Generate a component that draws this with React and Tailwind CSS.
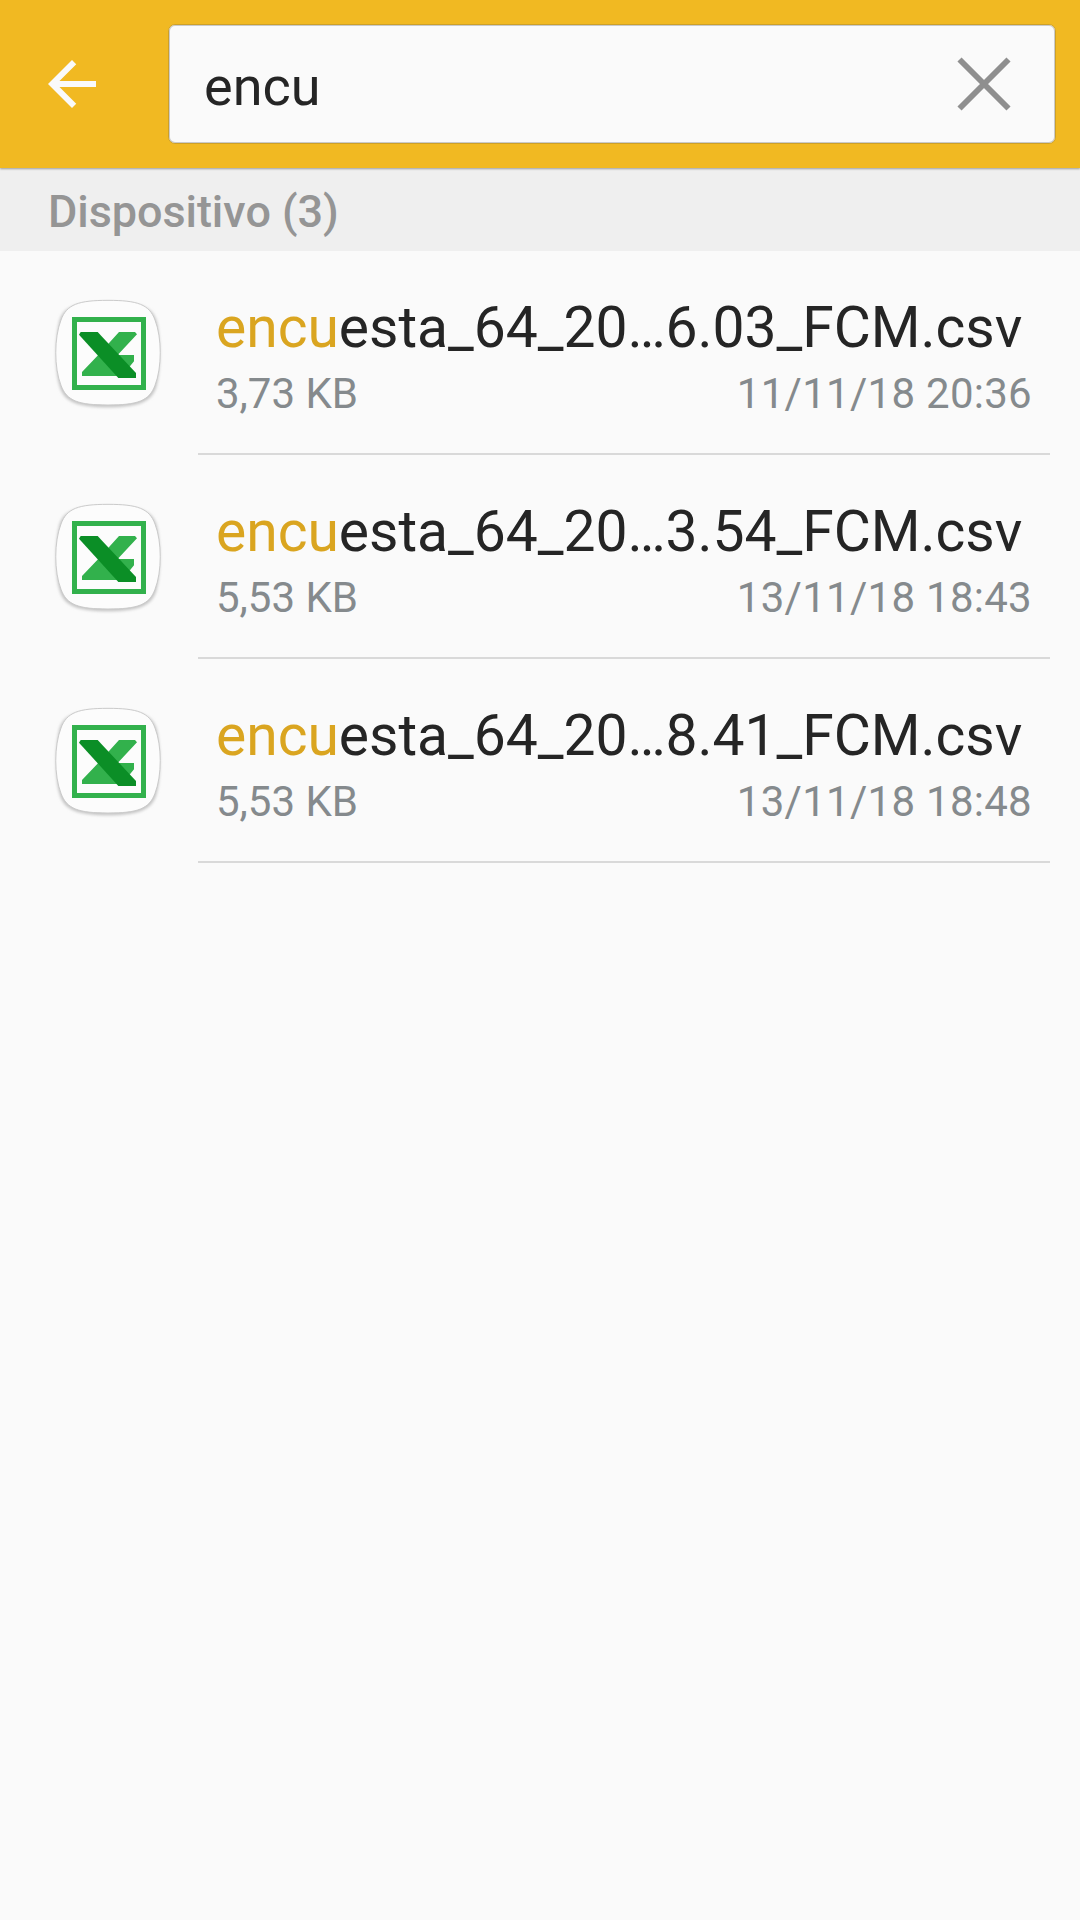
const files = [
  { tail: "esta_64_20…6.03_FCM.csv", size: "3,73 KB", date: "11/11/18 20:36" },
  { tail: "esta_64_20…3.54_FCM.csv", size: "5,53 KB", date: "13/11/18 18:43" },
  { tail: "esta_64_20…8.41_FCM.csv", size: "5,53 KB", date: "13/11/18 18:48" },
];

function SheetIcon() {
  return (
    <svg viewBox="0 0 420 390" className="mt-[39px] ml-10 h-[130px] w-[140px] shrink-0">
      <defs>
        <filter id="soft" x="-10%" y="-10%" width="120%" height="125%">
          <feGaussianBlur stdDeviation="4" />
        </filter>
      </defs>
      <path
        d="M204 37C300 37 338 50 350 94C363 145 363 240 350 286C338 334 300 352 204 352C108 352 70 334 58 286C45 240 45 145 58 94C70 50 108 37 204 37Z"
        fill="#c4c4c4"
        filter="url(#soft)"
      />
      <path
        d="M204 31C292 31 328 43 345 90C366 143 366 233 345 286C328 333 292 345 204 345C116 345 80 333 63 286C42 233 42 143 63 90C80 43 116 31 204 31Z"
        fill="#fcfcfc"
        stroke="#cbcbcb"
        strokeWidth="3"
      />
      <rect x="103.500" y="88.500" width="207" height="204" fill="#fcfcfc" stroke="#32b14c" strokeWidth="15" />
      <path d="M237 126H285L291 133L233 195H282V214L268 231L240 258H126V246L174 196Z" fill="#32b14c" />
      <path d="M122 126H173L288 249V264H235L117 134Z" fill="#0b8e26" />
    </svg>
  );
}

function FileRow({ file }) {
  return (
    <li className="flex h-[204px]">
      <SheetIcon />
      <div className="ml-[18px] flex w-[852px] flex-col border-b-2 border-[#d9d9d9] pt-[44px] pr-[18px] pl-[18px]">
        <div className="text-[57px] leading-[66px] tracking-[-0.03px] whitespace-nowrap text-[#252525]">
          <span className="text-[#daa520]">encu</span>
          {file.tail}
        </div>
        <div className="flex justify-between text-[42px] leading-[66px] text-[#858a8d]">
          <span>{file.size}</span>
          <span className="tracking-[0.28px] [font-kerning:none]">{file.date}</span>
        </div>
      </div>
    </li>
  );
}

export default function App() {
  return (
    <div className="h-[1920px] w-[1080px] overflow-hidden bg-[#fafafa] font-['Roboto',sans-serif]">
      <header className="relative z-10 flex h-[168px] items-center bg-[#f1b922] pr-6 pl-9 shadow-[0_1px_2px_rgba(0,0,0,0.35)]">
        <svg viewBox="0 0 24 24" className="size-[72px] shrink-0" fill="#fafafa">
          <path d="M20 11H7.83l5.59-5.59L12 4l-8 8 8 8 1.41-1.41L7.83 13H20z" />
        </svg>
        <div className="ml-[60px] flex h-[120px] flex-1 items-center justify-between rounded-[7px] border border-[#cda028] bg-[#fafafa] pr-[44px] pl-[35px] shadow-[inset_0_0_0_1px_#c9cacb]">
          <span className="pt-[5px] text-[54px] leading-[64px] text-[#252525]">encu</span>
          <svg viewBox="0 0 54 54" className="size-[54px]" stroke="#8f8f8f" strokeWidth="5.800">
            <path d="M2.500 2.500L51.500 51.500M51.500 2.500L2.500 51.500" />
          </svg>
        </div>
      </header>
      <div className="flex h-[83px] items-center bg-[#efefef] pt-1 pl-12 text-[45px] leading-[53px] font-medium tracking-[-0.08px] text-[#959595] [font-kerning:none]">
        Dispositivo (3)
      </div>
      <ul>
        {files.map((file) => (
          <FileRow key={file.date} file={file} />
        ))}
      </ul>
    </div>
  );
}
